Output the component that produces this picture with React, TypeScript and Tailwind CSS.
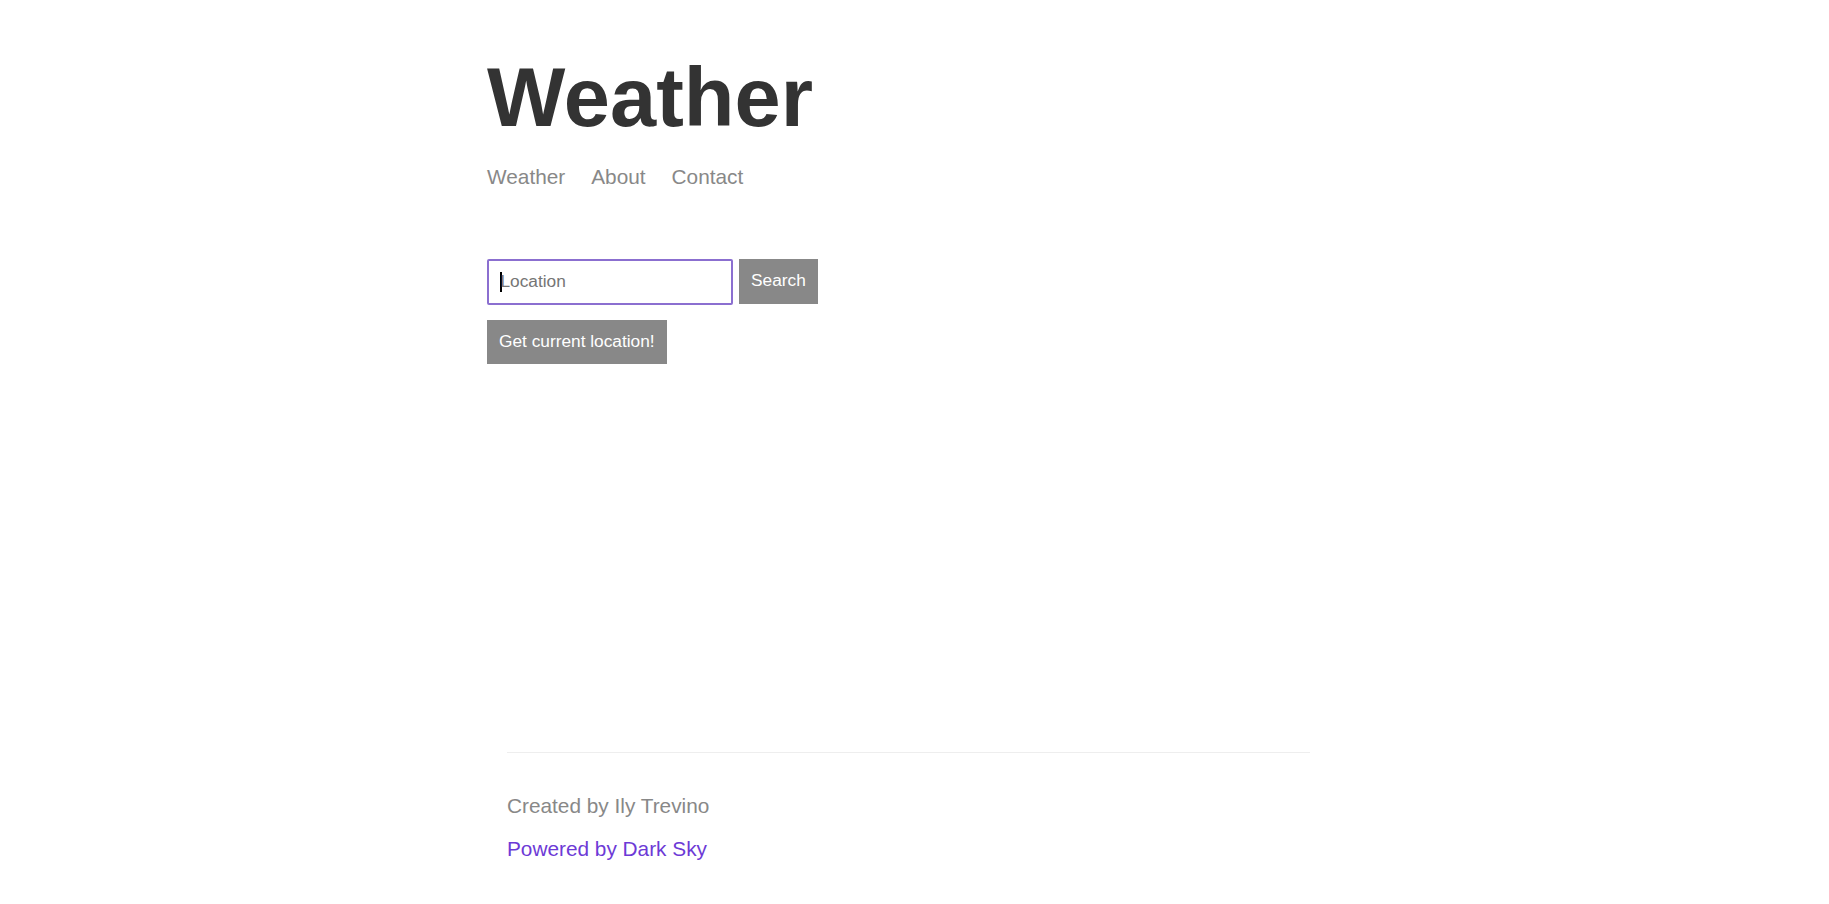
import React from "react";

export default function App() {
  return (
    <div className="min-h-[904px] bg-white font-['Liberation_Sans',Arial,sans-serif]">
      <div className="ml-[487px] w-[855px] pt-[56px]">
        <h1 className="text-[83px] font-bold leading-none text-[#333333]">Weather</h1>
        <nav className="mt-[28px] flex gap-[26px] text-[20.8px] leading-none text-[#888888]">
          <a>Weather</a>
          <a>About</a>
          <a>Contact</a>
        </nav>
        <div className="mt-[71px] flex gap-[6px]">
          <div className="flex h-[46px] w-[246px] items-center rounded-[2px] border-2 border-[#8b6fd0] px-[11px] text-[17.3px] text-[#757575]">
            <span className="mr-[-1px] inline-block h-[20px] w-[1.5px] bg-black"></span>
            <span>Location</span>
          </div>
          <button className="h-[45px] bg-[#888888] px-[12px] text-[17.3px] text-white">Search</button>
        </div>
        <div className="mt-[15px]">
          <button className="h-[44px] bg-[#888888] px-[12px] text-[17.3px] text-white">Get current location!</button>
        </div>
        <footer className="ml-[20px] mt-[388px] w-[803px]">
          <div className="h-px bg-[#eeeeee]"></div>
          <p className="mt-[43px] text-[20.8px] leading-none text-[#888888]">Created by Ily Trevino</p>
          <p className="mt-[22px] text-[20.8px] leading-none text-[#6d3ad6]">Powered by Dark Sky</p>
        </footer>
      </div>
    </div>
  );
}
